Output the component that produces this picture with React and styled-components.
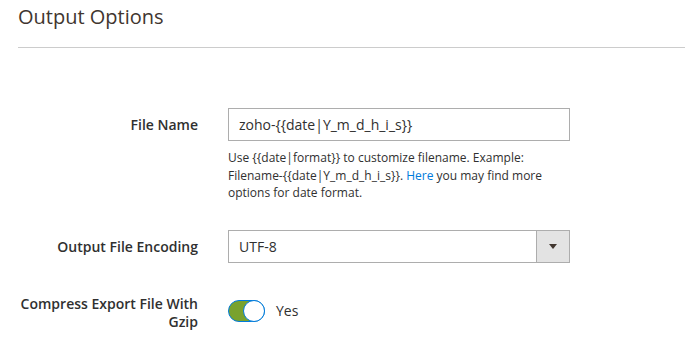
import styled, { createGlobalStyle } from "styled-components";

const GlobalStyle = createGlobalStyle`
  body {
    margin: 0;
    background: #ffffff;
    font-family: "Open Sans", "Liberation Sans", sans-serif;
    color: #303030;
  }
`;

function App() {
  return (
    <>
      <GlobalStyle />
      <StSection>
        <StHeader>
          <StTitle>Output Options</StTitle>
        </StHeader>

        <StFields>
          <StField $top={60}>
            <StLabel>File Name</StLabel>
            <StControl>
              <StInput type="text" defaultValue="zoho-{{date|Y_m_d_h_i_s}}" />
              <StNote>
                Use {"{{date|format}}"} to customize filename. Example:
                Filename-{"{{date|Y_m_d_h_i_s}}"}. <StLink href="#">Here</StLink>{" "}
                you may find more options for date format.
              </StNote>
            </StControl>
          </StField>

          <StField $top={28}>
            <StLabel>Output File Encoding</StLabel>
            <StControl>
              <StSelect>
                <StSelectValue>UTF-8</StSelectValue>
                <StSelectButton>
                  <StArrow />
                </StSelectButton>
              </StSelect>
            </StControl>
          </StField>

          <StField $top={40}>
            <StLabel $multiline>Compress Export File With Gzip</StLabel>
            <StControl>
              <StToggleRow>
                <StToggle $on>
                  <StKnob />
                </StToggle>
                <StToggleText>Yes</StToggleText>
              </StToggleRow>
            </StControl>
          </StField>
        </StFields>
      </StSection>
    </>
  );
}

export default App;

const StSection = styled.div`
  padding-left: 18px;
`;

const StHeader = styled.div`
  padding: 3px 0 16px;
  border-bottom: 1px solid #cccccc;
`;

const StTitle = styled.h2`
  margin: 0;
  font-size: 20px;
  line-height: 28px;
  font-weight: 400;
  color: #41362f;
`;

const StFields = styled.div`
  display: flex;
  flex-direction: column;
`;

const StField = styled.div`
  display: grid;
  grid-template-columns: 180px 342px;
  column-gap: 30px;
  align-items: start;
  margin-top: ${(p) => p.$top}px;
`;

const StLabel = styled.label`
  text-align: right;
  font-size: 14px;
  font-weight: 600;
  line-height: 18px;
  color: #303030;
  padding-top: ${(p) => (p.$multiline ? "0" : "8px")};
  margin-top: ${(p) => (p.$multiline ? "-8px" : "0")};
`;

const StControl = styled.div`
  display: flex;
  flex-direction: column;
`;

const StInput = styled.input`
  box-sizing: border-box;
  width: 100%;
  height: 33px;
  padding: 0 10px;
  border: 1px solid #adadad;
  border-radius: 0;
  font-family: inherit;
  font-size: 14px;
  color: #303030;
  outline: none;
`;

const StNote = styled.div`
  margin-top: 8px;
  font-size: 12px;
  line-height: 17.5px;
  color: #303030;
`;

const StLink = styled.a`
  color: #007bdb;
  text-decoration: none;
`;

const StSelect = styled.div`
  box-sizing: border-box;
  display: flex;
  height: 33px;
  border: 1px solid #adadad;
`;

const StSelectValue = styled.div`
  flex: 1;
  display: flex;
  align-items: center;
  padding: 0 10px;
  font-size: 14px;
  color: #303030;
`;

const StSelectButton = styled.div`
  width: 32px;
  display: flex;
  align-items: center;
  justify-content: center;
  background: #e3e3e3;
  border-left: 1px solid #adadad;
`;

const StArrow = styled.span`
  width: 0;
  height: 0;
  border-left: 4px solid transparent;
  border-right: 4px solid transparent;
  border-top: 5px solid #41362f;
`;

const StToggleRow = styled.div`
  display: flex;
  align-items: center;
  gap: 11px;
  margin-top: -3px;
`;

const StToggle = styled.div`
  box-sizing: border-box;
  position: relative;
  width: 37px;
  height: 22px;
  border-radius: 12px;
  border: 1px solid #007bdb;
  background: ${(p) => (p.$on ? "#79a22e" : "#e3e3e3")};
`;

const StKnob = styled.span`
  box-sizing: border-box;
  position: absolute;
  top: -1px;
  right: -1px;
  width: 22px;
  height: 22px;
  border-radius: 50%;
  background: #ffffff;
  border: 1px solid #007bdb;
`;

const StToggleText = styled.span`
  font-size: 14px;
  color: #303030;
`;
